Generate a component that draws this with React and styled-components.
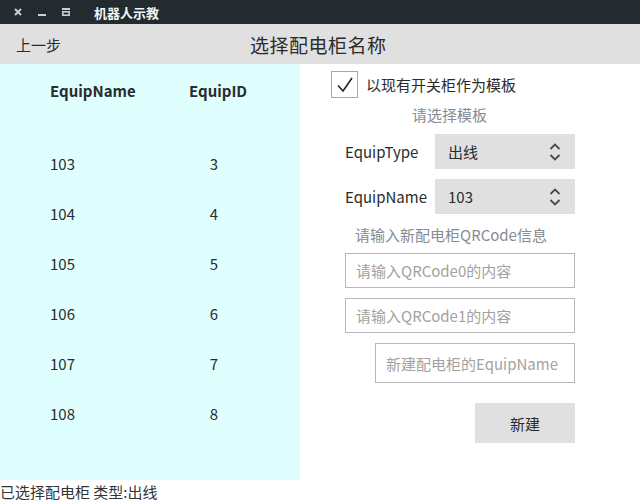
import React from 'react';
import styled, { createGlobalStyle } from 'styled-components';

const rows = [
  { name: '103', id: '3' },
  { name: '104', id: '4' },
  { name: '105', id: '5' },
  { name: '106', id: '6' },
  { name: '107', id: '7' },
  { name: '108', id: '8' },
];

const Global = createGlobalStyle`
  html, body {
    margin: 0;
    padding: 0;
    background: #fff;
  }
  body {
    font-family: "Noto Sans CJK SC", "Noto Sans", sans-serif;
    color: #2b2b2b;
  }
`;

const Window = styled.div`
  width: 640px;
  height: 504px;
  display: flex;
  flex-direction: column;
  overflow: hidden;
`;

const TitleBar = styled.div`
  height: 24px;
  background: #232b31;
  display: flex;
  align-items: center;
  padding-left: 6px;
`;

const WinButton = styled.div`
  width: 24px;
  height: 24px;
  display: flex;
  align-items: center;
  justify-content: center;
`;

const WinTitle = styled.div`
  margin-left: 16px;
  color: #f2f4f5;
  font-size: 13px;
  font-weight: bold;
`;

const Header = styled.div`
  height: 40px;
  background: #e0e0e0;
  display: grid;
  grid-template-columns: 250px 1fr;
  align-items: center;
`;

const Back = styled.div`
  font-size: 15px;
  padding-left: 16px;
`;

const PageTitle = styled.div`
  font-size: 19px;
  letter-spacing: 0.5px;
`;

const Main = styled.div`
  flex: 1;
  display: flex;
`;

const List = styled.div`
  width: 300px;
  background: #dfffff;
  display: flex;
  flex-direction: column;
`;

const ListRow = styled.div`
  display: grid;
  grid-template-columns: 130px 68px;
  padding-left: 50px;
  height: ${p => (p.head ? 52 : 50)}px;
  align-items: center;
  margin-bottom: ${p => (p.head ? 22 : 0)}px;
  font-size: 15px;
  font-weight: ${p => (p.head ? 'bold' : 'normal')};
`;

const IdCell = styled.div`
  text-align: center;
  padding-left: ${p => (p.head ? 8 : 0)}px;
`;

const Form = styled.div`
  flex: 1;
  display: flex;
  flex-direction: column;
`;

const CheckRow = styled.label`
  display: flex;
  align-items: center;
  margin: 7px 0 0 31px;
  font-size: 15px;
`;

const CheckBox = styled.span`
  width: 25px;
  height: 25px;
  border: 1px solid #a8a8a8;
  background: #fff;
  display: flex;
  align-items: center;
  justify-content: center;
  margin-right: 8px;
`;

const Hint = styled.div`
  font-size: 15px;
  color: #868c94;
  margin-left: ${p => p.indent}px;
  margin-top: ${p => p.top}px;
  line-height: 20px;
`;

const FieldRow = styled.div`
  display: flex;
  align-items: center;
  margin-top: ${p => p.top}px;
  padding-left: 45px;
`;

const FieldLabel = styled.div`
  width: 90px;
  font-size: 15px;
`;

const Combo = styled.div`
  width: 140px;
  height: 35px;
  background: #e0e0e0;
  display: flex;
  align-items: center;
  justify-content: space-between;
  padding: 0 14px 0 13px;
  box-sizing: border-box;
  font-size: 15px;
`;

const TextField = styled.div`
  box-sizing: border-box;
  width: ${p => p.width}px;
  height: ${p => p.height}px;
  align-self: flex-end;
  margin-right: 65px;
  margin-top: ${p => p.top}px;
  border: 1px solid #b8b8b8;
  display: flex;
  align-items: center;
  padding-left: 10px;
  font-size: 15px;
  color: #a2a2a2;
`;

const Button = styled.div`
  width: 100px;
  height: 40px;
  align-self: flex-end;
  margin: 20px 65px 0 0;
  background: #e0e0e0;
  display: flex;
  align-items: center;
  justify-content: center;
  font-size: 15px;
`;

const Status = styled.div`
  height: 24px;
  line-height: 24px;
  font-size: 15px;
  color: #333;
`;

const Spin = () => (
  <svg width="12" height="22" viewBox="0 0 12 22">
    <path d="M1.5 8 L6 3.5 L10.5 8" fill="none" stroke="#4a4a4a" strokeWidth="1.8" />
    <path d="M1.5 14 L6 18.5 L10.5 14" fill="none" stroke="#4a4a4a" strokeWidth="1.8" />
  </svg>
);

const App = () => (
  <Window>
    <Global />
    <TitleBar>
      <WinButton>
        <svg width="8" height="8" viewBox="0 0 8 8">
          <path d="M1 1 L7 7 M7 1 L1 7" stroke="#c9cfd2" strokeWidth="2" />
        </svg>
      </WinButton>
      <WinButton>
        <svg width="8" height="8" viewBox="0 0 8 8">
          <rect x="0" y="6" width="8" height="2" fill="#c9cfd2" />
        </svg>
      </WinButton>
      <WinButton>
        <svg width="8" height="8" viewBox="0 0 8 8">
          <rect x="0" y="0" width="8" height="2" fill="#c9cfd2" />
          <rect x="0.8" y="3.8" width="6.4" height="3.4" fill="none" stroke="#c9cfd2" strokeWidth="1.6" />
        </svg>
      </WinButton>
      <WinTitle>机器人示教</WinTitle>
    </TitleBar>

    <Header>
      <Back>上一步</Back>
      <PageTitle>选择配电柜名称</PageTitle>
    </Header>

    <Main>
      <List>
        <ListRow head>
          <div>EquipName</div>
          <IdCell head>EquipID</IdCell>
        </ListRow>
        {rows.map(r => (
          <ListRow key={r.name}>
            <div>{r.name}</div>
            <IdCell>{r.id}</IdCell>
          </ListRow>
        ))}
      </List>

      <Form>
        <CheckRow>
          <CheckBox>
            <svg width="18" height="18" viewBox="0 0 18 18">
              <path d="M2 9.5 L7 15 L16 2" fill="none" stroke="#222" strokeWidth="1.6" />
            </svg>
          </CheckBox>
          以现有开关柜作为模板
        </CheckRow>

        <Hint indent={112} top={7}>请选择模板</Hint>

        <FieldRow top={9}>
          <FieldLabel>EquipType</FieldLabel>
          <Combo>
            出线
            <Spin />
          </Combo>
        </FieldRow>

        <FieldRow top={10}>
          <FieldLabel>EquipName</FieldLabel>
          <Combo>
            103
            <Spin />
          </Combo>
        </FieldRow>

        <Hint indent={55} top={11}>请输入新配电柜QRCode信息</Hint>

        <TextField width={230} height={35} top={8}>请输入QRCode0的内容</TextField>
        <TextField width={230} height={35} top={10}>请输入QRCode1的内容</TextField>
        <TextField width={200} height={40} top={10}>新建配电柜的EquipName</TextField>

        <Button>新建</Button>
      </Form>
    </Main>

    <Status>已选择配电柜 类型:出线</Status>
  </Window>
);

export default App;
